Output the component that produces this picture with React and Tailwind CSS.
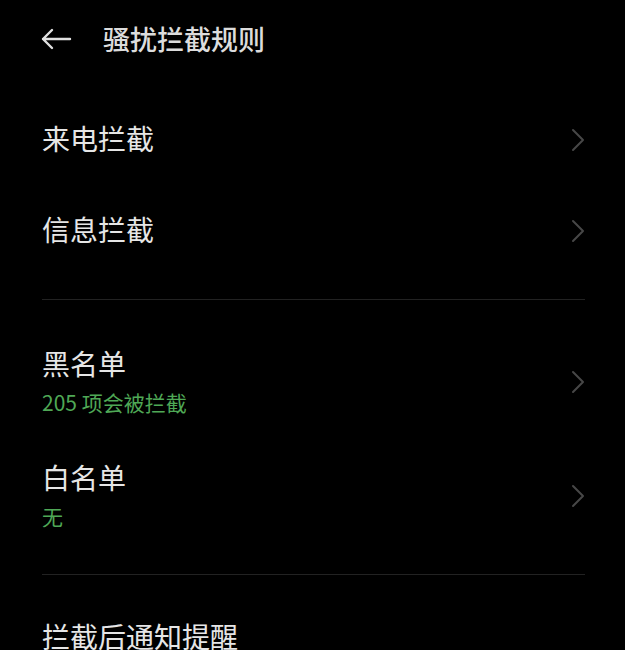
const font = { fontFamily: '"Noto Sans CJK SC", "Noto Sans", sans-serif' };

function Chevron() {
  return (
    <svg width="14" height="24" viewBox="0 0 14 24" fill="none" className="shrink-0">
      <path d="M2 2 L12 12 L2 22" stroke="#474747" strokeWidth="2" strokeLinecap="round" strokeLinejoin="round" />
    </svg>
  );
}

function Row({ title, sub, tall, noArrow }) {
  return (
    <div className={`flex items-center justify-between pr-[40px] ${tall ? "h-[114px]" : "h-[91px]"}`}>
      <div className="flex flex-col pb-[4px]">
        <p className="text-[28px] leading-[36px] text-[#e6e6e6]">{title}</p>
        {sub && <p className="mt-[7px] text-[21px] leading-[28px] text-[#4fa856]">{sub}</p>}
      </div>
      {!noArrow && <Chevron />}
    </div>
  );
}

export default function App() {
  return (
    <div className="w-[625px] h-[650px] overflow-hidden bg-black" style={font}>
      <div className="h-[78px] flex items-center px-[40px] gap-[31px]">
        <svg width="32" height="24" viewBox="0 0 32 24" fill="none">
          <path d="M30 12 H3 M12 3 L3 12 L12 21" stroke="#e0e0e0" strokeWidth="2.4" strokeLinecap="round" strokeLinejoin="round" />
        </svg>
        <h1 className="text-[27px] font-medium text-[#dcdcdc]">骚扰拦截规则</h1>
      </div>

      <div className="pl-[42px]">
        <div className="pt-[16px] pb-[23px]">
          <Row title="来电拦截" />
          <Row title="信息拦截" />
        </div>
        <div className="h-px bg-[#222222] mr-[40px]" />
        <div className="pt-[25px] pb-[21px]">
          <Row title="黑名单" sub="205 项会被拦截" tall />
          <Row title="白名单" sub="无" tall />
        </div>
        <div className="h-px bg-[#222222] mr-[40px]" />
        <div className="pt-[17px]">
          <Row title="拦截后通知提醒" noArrow />
        </div>
      </div>
    </div>
  );
}
